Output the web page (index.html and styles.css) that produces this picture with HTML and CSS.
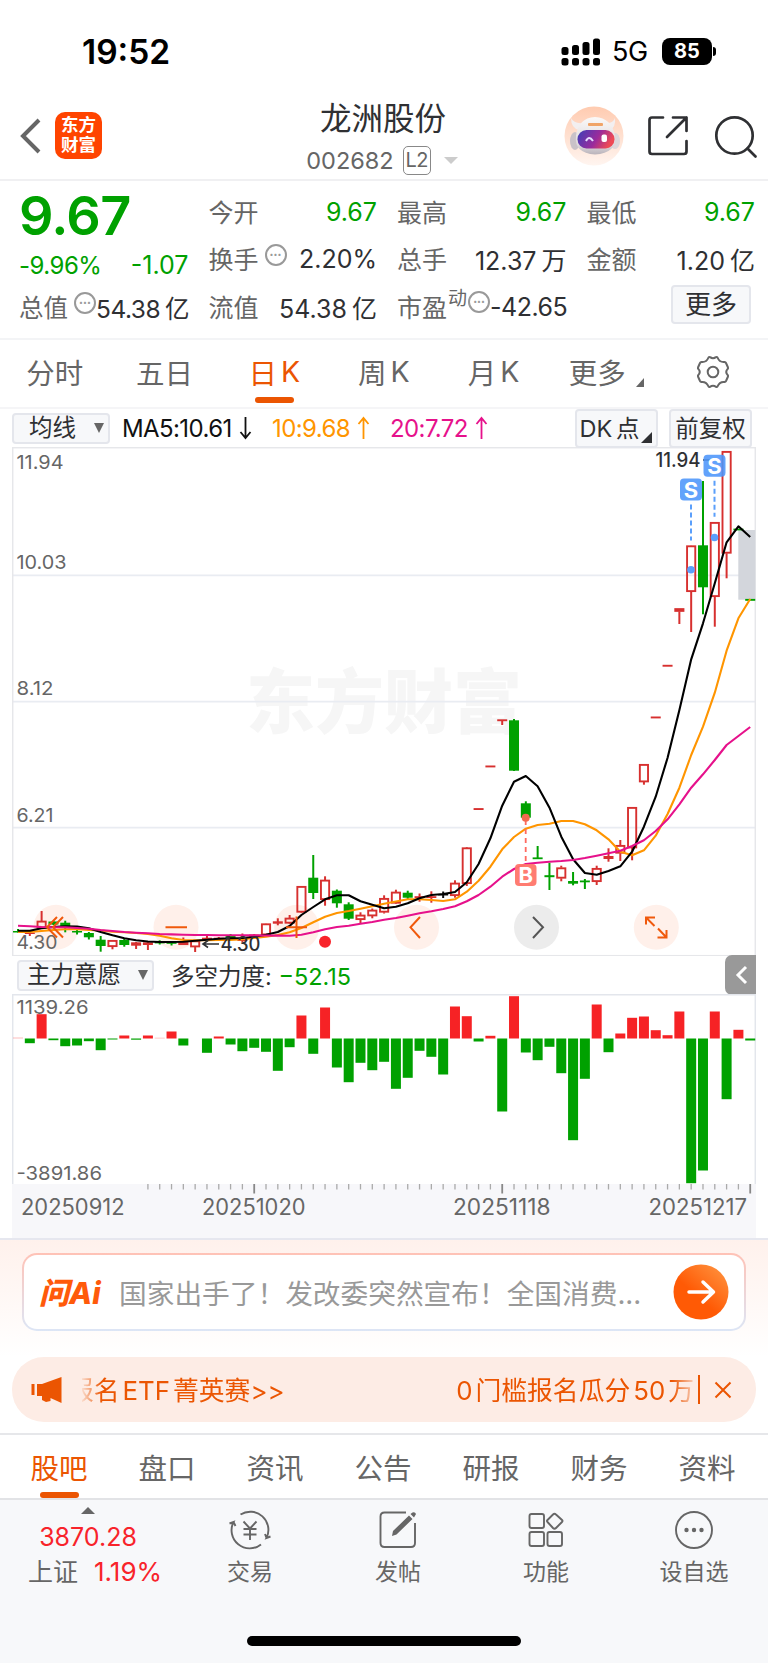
FILE: index.html
```html
<!DOCTYPE html>
<html lang="zh-CN">
<head>
	<meta charset="utf-8">
	<title>龙洲股份 002682</title>
	<link rel="stylesheet" href="styles.css">
</head>
<body>
	<div class="status">
		<span class="clock">19:52</span>
		<svg class="signal" width="40" height="28" viewBox="0 0 40 28">
			<rect x="0.5" y="9" width="7" height="8" rx="2.5"/><rect x="11" y="7" width="7" height="10" rx="2.5"/>
			<rect x="21.5" y="4" width="7" height="13" rx="2.5"/><rect x="32" y="0.5" width="7" height="16.5" rx="2.5"/>
			<rect x="0.5" y="20" width="7" height="7.5" rx="2.5"/><rect x="11" y="20" width="7" height="7.5" rx="2.5"/>
			<rect x="21.5" y="20" width="7" height="7.5" rx="2.5"/><rect x="32" y="20" width="7" height="7.5" rx="2.5"/>
		</svg>
		<span class="net">5G</span>
		<span class="battery">85</span><i class="nub"></i>
	</div>

	<header class="nav">
		<svg class="back" width="22" height="36" viewBox="0 0 22 36"><path d="M19 2L3 18L19 34" fill="none" stroke="#666" stroke-width="4"/></svg>
		<div class="logo">东方<br>财富</div>
		<div class="title">
			<h1>龙洲股份</h1>
			<div class="code">002682<span class="l2">L2</span><i class="down"></i></div>
		</div>
		<svg class="robot" width="60" height="60" viewBox="0 0 60 60">
			<defs>
				<linearGradient id="peach" x1="0" y1="0" x2="0" y2="1"><stop offset="0" stop-color="#ffcbb0"/><stop offset="1" stop-color="#fff5f0"/></linearGradient>
				<linearGradient id="face" x1="0" y1="0" x2="1" y2="0.3"><stop offset="0" stop-color="#3d3fb8"/><stop offset="0.6" stop-color="#9a2b9c"/><stop offset="1" stop-color="#ee4a55"/></linearGradient>
				<linearGradient id="shell" x1="0" y1="0" x2="0" y2="1"><stop offset="0" stop-color="#fbf9f8"/><stop offset="0.75" stop-color="#ded9dc"/><stop offset="1" stop-color="#b9b3ba"/></linearGradient>
			</defs>
			<circle cx="30" cy="30" r="29.5" fill="url(#peach)"/>
			<path d="M7 12Q7 22 15 24L19 17Q10 18 7 12ZM51 12Q52 21 46 24L41 17Q49 18 51 12Z" fill="#f3eff0"/>
			<ellipse cx="11" cy="35" rx="5" ry="9" fill="#c9c2c8"/><ellipse cx="51" cy="35" rx="5" ry="8" fill="#ddd7da"/>
			<path d="M12 30Q14 12 31 11Q48 12 51 30Q53 47 31 48.500Q10 47 12 30Z" fill="url(#shell)"/>
			<rect x="13.500" y="24" width="37" height="18.500" rx="9" fill="url(#face)"/>
			<rect x="24" y="17" width="15" height="3" rx="1" fill="#f0a468"/>
			<path d="M22 35Q25 29 29 35" fill="none" stroke="#e5dcff" stroke-width="2"/>
			<rect x="37.500" y="28.500" width="5.500" height="7.500" rx="2" fill="#fff"/>
		</svg>
		<svg class="share" width="42" height="42" viewBox="0 0 42 42" fill="none" stroke="#2f3033" stroke-width="2.700" stroke-linecap="round" stroke-linejoin="round">
			<path d="M16 2.500H5Q2.500 2.500 2.500 5V36.500Q2.500 39 5 39H37Q39.500 39 39.500 36.500V26M26 2.500H39.500V16M39.500 2.500L20 22"/>
		</svg>
		<svg class="search" width="44" height="44" viewBox="0 0 44 44" fill="none" stroke="#2f3033" stroke-width="2.700" stroke-linecap="round">
			<circle cx="20.500" cy="20.500" r="18.200"/><path d="M33.500 33.500L41.500 41.500"/>
		</svg>
	</header>

	<section class="quote">
		<div class="col first">
			<div class="price">9.67</div>
			<div class="chg"><span>-9.96%</span><span class="diff">-1.07</span></div>
			<div class="cell"><label>总值</label><i class="tip">•••</i><b>54.38<span class="sp">亿</span></b></div>
		</div>
		<div class="col">
			<div class="cell"><label>今开</label><b class="green">9.67</b></div>
			<div class="cell"><label>换手</label><i class="tip">•••</i><b>2.20%</b></div>
			<div class="cell"><label>流值</label><b>54.38<span class="sp">亿</span></b></div>
		</div>
		<div class="col">
			<div class="cell"><label>最高</label><b class="green">9.67</b></div>
			<div class="cell"><label>总手</label><b>12.37<span class="sp">万</span></b></div>
			<div class="cell"><label>市盈</label><sup>动</sup><i class="tip">•••</i><b class="pe">-42.65</b></div>
		</div>
		<div class="col">
			<div class="cell"><label>最低</label><b class="green">9.67</b></div>
			<div class="cell"><label>金额</label><b>1.20<span class="sp">亿</span></b></div>
			<div class="cell"><button class="more">更多</button></div>
		</div>
	</section>

	<nav class="periods">
		<a>分时</a><a>五日</a><a class="on">日<span class="sp">K</span></a><a>周<span class="sp">K</span></a><a>月<span class="sp">K</span></a><a class="menu">更多<i></i></a>
		<a><svg width="34" height="34" viewBox="0 0 34 34" fill="none" stroke="#666" stroke-width="2">
			<path d="M12.500 2.500Q13 1.800 14 2.200Q17 4.200 20 2.200Q21 1.800 21.500 2.500Q23.500 7.500 28.500 7Q29.600 7.200 30 8L32 12.500Q32.300 13.500 31.500 14.200Q29 17 31.500 19.800Q32.300 20.500 32 21.500L30 26Q29.600 26.800 28.500 27Q23.500 26.500 21.500 31.500Q21 32.200 20 31.800Q17 29.800 14 31.800Q13 32.200 12.500 31.500Q10.500 26.500 5.500 27Q4.400 26.800 4 26L2 21.500Q1.700 20.500 2.500 19.800Q5 17 2.500 14.200Q1.700 13.500 2 12.500L4 8Q4.400 7.200 5.500 7Q10.500 7.500 12.500 2.500Z" stroke-linejoin="round"/><circle cx="17" cy="17" r="5.300"/>
		</svg></a>
	</nav>

	<div class="ma">
		<button class="pick">均线<i class="caret"></i></button>
		<span class="m5">MA5:10.61<svg width="13" height="24" viewBox="0 0 13 24"><path d="M6.500 1V22M1.500 16L6.500 22L11.500 16"/></svg></span>
		<span class="m10">10:9.68<svg width="13" height="24" viewBox="0 0 13 24"><path d="M6.500 23V2M1.500 8L6.500 2L11.500 8"/></svg></span>
		<span class="m20">20:7.72<svg width="13" height="24" viewBox="0 0 13 24"><path d="M6.500 23V2M1.500 8L6.500 2L11.500 8"/></svg></span>
		<button class="dk">DK 点<i></i></button>
		<button class="fq">前复权</button>
	</div>

	<svg id="kline" width="744" height="509" viewBox="12 447 744 509"></svg>

	<div class="force">
		<button class="pick">主力意愿<i class="caret"></i></button>
		<div class="power">多空力度: <em>−52.15</em></div>
		<div class="fold"><svg width="14" height="22" viewBox="0 0 14 22"><path d="M12 3L4 11L12 19" fill="none" stroke="#fff" stroke-width="3"/></svg></div>
	</div>

	<svg id="bars" width="744" height="244" viewBox="12 994 744 244"></svg>

	<section class="ai">
		<div class="ask">
			<span class="mark">问Ai</span>
			<span class="hint">国家出手了！发改委突然宣布！全国消费...</span>
			<svg class="go" width="56" height="56" viewBox="0 0 56 56">
				<defs><linearGradient id="hot" x1="0.9" y1="0" x2="0.200" y2="0.8"><stop offset="0" stop-color="#ff9440"/><stop offset="0.7" stop-color="#ff5a05"/></linearGradient></defs>
				<circle cx="28" cy="28" r="27.500" fill="url(#hot)"/>
				<path d="M16 28H40M30 18L40.500 28L30 38" fill="none" stroke="#fff" stroke-width="3.500" stroke-linecap="round" stroke-linejoin="round"/>
			</svg>
		</div>
	</section>

	<div class="notice">
		<svg class="horn" width="32" height="28" viewBox="0 0 32 28" fill="#eb5502"><path d="M0.500 8H3.500V19H0.500ZM6 8H11L30.500 1V27L19.500 22V25L15 26L11 24V20H6Z"/></svg>
		<div class="roll"><span class="left">报名<span class="sp">ETF</span><span class="sp">菁英赛&gt;&gt;</span></span><span>0<span class="sp">门槛报名瓜分</span><span class="sp">50</span><span class="sp">万</span></span></div>
		<i class="bar"></i>
		<svg width="18" height="18" viewBox="0 0 18 18"><path d="M1.500 1.500L16.500 16.500M16.500 1.500L1.500 16.500" stroke="#eb5502" stroke-width="2"/></svg>
	</div>

	<nav class="topics">
		<a class="on">股吧</a><a>盘口</a><a>资讯</a><a>公告</a><a>研报</a><a>财务</a><a>资料</a>
	</nav>

	<footer class="dock">
		<div class="index">
			<i class="up"></i>
			<div class="pts">3870.28</div>
			<div class="pct">上证<span>1.19%</span></div>
		</div>
		<a><svg width="44" height="40" viewBox="0 0 44 40">
			<path d="M12.500 4.500A18.200 18.200 0 0 1 38.500 28L42.500 26.500M38.500 28L37 24M33 34.500A18.200 18.200 0 0 1 5.500 12L1.500 13.500M5.500 12L7.500 16M15.500 11.500L22 18.500L28.500 11.500M22 18.500V30M15.500 19H28.500M15.500 24.500H28.500"/></svg>交易</a>
		<a><svg width="40" height="40" viewBox="0 0 40 40">
			<path d="M28 2.500H6.500Q2.500 2.500 2.500 6.500V33Q2.500 37 6.500 37H33Q37 37 37 33V13"/>
			<path d="M15 21L31 5.500L34.500 9L18.500 24.500L14 26ZM32.500 4L34.500 2.500Q37 1.500 38 4L36 7.500Z" fill="#666" stroke="none"/></svg>发帖</a>
		<a><svg width="40" height="40" viewBox="0 0 40 40">
			<rect x="3.500" y="4" width="14.500" height="14" rx="2"/><rect x="3.500" y="22" width="14.500" height="14" rx="2"/><rect x="21.500" y="22" width="14.500" height="14" rx="2"/>
			<path d="M27 4.500Q28.500 3 30 4.500L36 10Q37 11 36 12L30 18Q28.500 19.500 27 18L21.500 12Q20.500 11 21.500 10Z"/></svg>功能</a>
		<a><svg width="40" height="40" viewBox="0 0 40 40">
			<circle cx="20" cy="20" r="18"/><g fill="#666" stroke="none"><circle cx="12.500" cy="20" r="2.200"/><circle cx="20" cy="20" r="2.200"/><circle cx="27.500" cy="20" r="2.200"/></g></svg>设自选</a>
	</footer>
	<div class="home"><i></i></div>

	<script src="chart.js"></script>
</body>
</html>
```
FILE: styles.css
```css
* {
	box-sizing: border-box;
}
body {
	margin: 0;
	width: 768px;
	height: 1663px;
	overflow: hidden;
	background: #fff;
	color: #2f3033;
	font-family: Inter, "Noto Sans CJK SC", sans-serif;
	font-size: 25px;
}
svg {
	display: block;
	flex: none;
}
i, em, b {
	font-style: normal;
	font-weight: normal;
}
button {
	font: inherit;
	color: inherit;
	padding: 0;
	background: #f7f8fa;
	border: 2px solid #e4e6ec;
	border-radius: 4px;
	white-space: nowrap;
}
.green {
	color: #00a100;
}
/* gap between latin and chinese characters */
.sp {
	margin-left: 4px;
}

/* status bar */
.status {
	height: 103px;
	padding: 0 52px 0 82px;
	display: flex;
	align-items: center;
	color: #000;
}
.clock {
	font-size: 33.500px;
	font-weight: 600;
	margin-right: auto;
}
.net {
	font-size: 27px;
	letter-spacing: -0.500px;
	margin: 0 13px 0 11px;
	width: 37px;
}
.battery {
	width: 50px;
	height: 27px;
	line-height: 27px;
	border-radius: 8px;
	background: #000;
	color: #fff;
	font-size: 20px;
	font-weight: 700;
	text-align: center;
}
.nub {
	width: 3px;
	height: 9px;
	margin-left: 1px;
	border-radius: 0 3px 3px 0;
	background: #000;
}

/* header */
.nav {
	height: 78px;
	display: flex;
	align-items: center;
	padding: 0 10px 12px 20px;
	border-bottom: 2px solid #f0f0f2;
}
.back {
	margin-top: 2px;
}
.logo {
	width: 47px;
	height: 47px;
	margin: 1px 0 0 13px;
	padding-top: 3px;
	border-radius: 10px;
	background: #ff4400;
	color: #fff;
	font-size: 17.500px;
	font-weight: bold;
	line-height: 20px;
	text-align: center;
}
.title {
	margin-left: 162px;
	width: 238px;
	text-align: center;
	padding-top: 5px;
}
.title h1 {
	margin: 0;
	font-size: 31.500px;
	font-weight: normal;
	line-height: 38px;
}
.code {
	display: flex;
	align-items: center;
	justify-content: center;
	height: 30px;
	margin: 7px 0 0 -2px;
	color: #666;
	font-size: 23.500px;
}
.l2 {
	width: 28px;
	height: 29px;
	line-height: 26px;
	margin-left: 9px;
	border: 1.500px solid #888;
	border-radius: 5px;
	font-size: 20px;
	letter-spacing: -0.500px;
}
.down {
	margin-left: 13px;
	border: 7px solid transparent;
	border-top-color: #ccc;
	border-bottom: 0;
}
.robot {
	margin: 2px 0 0 auto;
}
.share {
	margin: 2px 0 0 23px;
}
.search {
	margin: 3px 0 0 25px;
}

/* quote */
.quote {
	display: flex;
	gap: 20px;
	height: 159px;
	padding: 7px 13px 0 19px;
	border-bottom: 2px solid #f3f4f6;
}
.col {
	width: 169.500px;
}
.price {
	height: 56px;
	line-height: 56px;
	font-size: 54px;
	font-weight: 600;
	letter-spacing: -0.700px;
	color: #00a100;
}
.chg {
	height: 42px;
	display: flex;
	justify-content: space-between;
	align-items: center;
	font-size: 24px;
	letter-spacing: -0.500px;
	color: #00a100;
}
.diff {
	font-size: 25px;
	letter-spacing: 0;
}
.cell {
	height: 47.500px;
	display: flex;
	align-items: center;
	white-space: nowrap;
}
.cell label, .cell sup {
	color: #666;
	margin-top: -2px;
}
.cell b {
	margin-left: auto;
}
.cell .pe {
	letter-spacing: -0.500px;
}
.first .cell {
	height: 42px;
	font-size: 24.500px;
}
.first .cell b {
	font-size: 24.500px;
	letter-spacing: -0.500px;
}
.first .sp {
	margin-left: 3px;
}
.cell .sp {
	margin-left: 5px;
}
.cell sup {
	font-size: 19px;
	margin: -16px 0 0 1px;
	line-height: 20px;
}
.tip {
	flex: none;
	width: 22px;
	height: 22px;
	margin: -9px 0 0 6px;
	border: 2px solid #999;
	border-radius: 50%;
	color: #999;
	font-size: 7px;
	line-height: 18px;
	text-align: center;
}
sup + .tip {
	margin-left: 1px;
}
.more {
	width: 80px;
	height: 39px;
	line-height: 34px;
	margin: -4px 4px 0 auto;
	font-size: 26px;
}

/* period tabs */
.periods {
	display: flex;
	height: 69px;
	border-bottom: 2px solid #f5f5f7;
	color: #666;
	font-size: 28.500px;
}
.periods a {
	width: 109.700px;
	height: 66px;
	padding-bottom: 3px;
	display: flex;
	align-items: center;
	justify-content: center;
	position: relative;
}
.periods .on, .topics .on {
	color: #eb5502;
}
.periods .on::after, .topics .on::after {
	content: "";
	position: absolute;
	left: 50%;
	bottom: 3px;
	width: 39px;
	height: 6px;
	margin-left: -19.500px;
	border-radius: 3px;
	background: #eb5502;
}
.periods .menu {
	padding-left: 6px;
}
.menu i {
	margin: 21px 0 0 10px;
	border-left: 8px solid transparent;
	border-bottom: 9px solid #666;
}

/* moving averages */
.ma {
	display: flex;
	align-items: center;
	height: 38px;
	padding: 0 16px 0 12px;
	font-size: 24px;
}
.pick {
	height: 31px;
	line-height: 26px;
	display: flex;
	align-items: center;
	justify-content: space-between;
	font-size: 23.500px;
}
.ma .pick {
	width: 98px;
	padding: 0 4px 0 15px;
}
.caret {
	border: 5px solid transparent;
	border-top: 10px solid #666;
	border-bottom: 0;
}
.ma span {
	display: flex;
	align-items: center;
	letter-spacing: -0.600px;
}
.ma span svg {
	margin-left: 7px;
	fill: none;
	stroke: currentColor;
	stroke-width: 1.800;
}
.m5 {
	color: #111;
	width: 150px;
	margin-left: 12px;
}
.m10 {
	color: #ff9500;
	width: 118px;
}
.m20 {
	color: #e6118b;
}
.dk, .fq {
	width: 83px;
	height: 39px;
	line-height: 35px;
	position: relative;
}
.dk {
	margin-left: auto;
	padding-right: 14px;
	font-size: 23.500px;
	word-spacing: -3px;
}
.dk i {
	position: absolute;
	right: 4px;
	bottom: 3px;
	border-left: 11px solid transparent;
	border-bottom: 11px solid #2f3033;
}
.fq {
	margin-left: 11px;
	font-size: 23.500px;
}

#kline, #bars {
	margin-left: 12px;
}

/* force index row */
.force {
	display: flex;
	align-items: center;
	height: 38px;
	margin: 0 12px 0 17px;
	font-size: 23.500px;
}
.force .pick {
	width: 137px;
	padding: 0 4px 0 8px;
}
.power {
	margin-left: 17px;
}
.power em {
	color: #00a100;
}
.fold {
	width: 31px;
	height: 40px;
	margin-left: auto;
	display: flex;
	align-items: center;
	justify-content: center;
	border-radius: 7px 0 0 7px;
	background: #999;
}

/* ai search */
.ai {
	height: 119px;
	padding: 13px 22px 0;
	border-top: 2px solid #e6e7ef;
	background: linear-gradient(#fff1ec, #fff);
}
.ask {
	height: 78px;
	display: flex;
	align-items: center;
	padding: 0 15px;
	border: 2px solid transparent;
	border-radius: 15px;
	background: linear-gradient(#fff, #fff) padding-box, linear-gradient(#ffc2b6, #dce6f6) border-box;
}
.mark {
	width: 80px;
	margin-top: -2px;
	font-size: 30px;
	font-weight: 800;
	font-style: italic;
	color: #ff5a0a;
}
.hint {
	color: #999;
	font-size: 27.700px;
	margin-top: -1px;
	white-space: nowrap;
}
.go {
	margin-left: auto;
}

/* notice */
.notice {
	height: 65px;
	margin: 0 12px;
	padding: 0 24px 0 19px;
	display: flex;
	align-items: center;
	border-radius: 32px;
	background: #fdece5;
	color: #eb5502;
	font-size: 25.800px;
}
.roll {
	display: flex;
	justify-content: space-between;
	width: 616px;
	margin: -2px 0 0 19px;
	overflow: hidden;
	white-space: nowrap;
	-webkit-mask-image: linear-gradient(90deg, rgba(0,0,0,0.1), #000 20px, #000 590px, rgba(0,0,0,0.2));
}
.left {
	margin-left: -14px;
}
.roll .sp {
	margin-left: 3px;
}
.bar {
	width: 2px;
	height: 29px;
	margin: 0 14px 0 4px;
	background: #eb5502;
}

/* topic tabs */
.topics {
	display: flex;
	height: 65px;
	margin-top: 11px;
	padding: 0 5px;
	border-top: 2px solid #e6e7ea;
	color: #666;
	font-size: 28.500px;
}
.topics a {
	width: 108px;
	display: flex;
	align-items: center;
	justify-content: center;
	position: relative;
}
.topics .on::after {
	bottom: 0;
}

/* bottom bar */
.dock {
	display: flex;
	height: 132px;
	border-top: 2px solid #e2e3e6;
	background: #f7f8fa;
	color: #666;
	font-size: 23px;
}
.dock a {
	width: 148px;
	display: flex;
	flex-direction: column;
	align-items: center;
	padding-top: 10px;
	line-height: 44px;
}
.dock svg {
	fill: none;
	stroke: #666;
	stroke-width: 1.900;
}
.index {
	width: 176px;
	display: flex;
	flex-direction: column;
	align-items: center;
	font-size: 25px;
}
.up {
	margin-top: 7px;
	border: 7px solid transparent;
	border-bottom-color: #666;
	border-top: 0;
}
.pts {
	line-height: 36px;
	margin-top: 5px;
	color: #f8232a;
}
.pct {
	line-height: 34px;
	margin-left: 14px;
}
.pct span {
	color: #f8232a;
	margin-left: 16px;
	font-size: 26px;
}
.home {
	height: 34px;
	background: #f7f8fa;
	padding-top: 6px;
}
.home i {
	display: block;
	width: 274px;
	height: 10px;
	margin: 0 auto;
	border-radius: 5px;
	background: #000;
}

/* chart text */
.axis {
	fill: #666;
	font-size: 19px;
}
.date {
	fill: #666;
	font-size: 22.500px;
}
.peak {
	fill: #2f3033;
	font-size: 19.500px;
	font-weight: 500;
}
.flag {
	fill: #fff;
	font-size: 22px;
	font-weight: 700;
	text-anchor: middle;
}
.water {
	fill: #f6f6f6;
	font-size: 70px;
	font-weight: 900;
}
```
FILE: chart.js
```javascript
var NS = "http://www.w3.org/2000/svg";
var RED = "#d7302f", GREEN = "#00a100";
var STEP = 11.81, X0 = 18;

function add(parent, tag, attrs, text) {
	var el = document.createElementNS(NS, tag);
	for (var k in attrs) el.setAttribute(k, attrs[k]);
	if (text) el.textContent = text;
	parent.appendChild(el);
	return el;
}
function cx(i) { return X0 + i * STEP; }
function line(svg, x1, y1, x2, y2, color, w, dash) {
	var a = {x1: x1, y1: y1, x2: x2, y2: y2, stroke: color, "stroke-width": w};
	if (dash) a["stroke-dasharray"] = dash;
	add(svg, "line", a);
}
function label(svg, cls, x, y, w, text) {
	add(svg, "text", {"class": cls, x: x, y: y, textLength: w, lengthAdjust: "spacingAndGlyphs"}, text);
}

// type, body top, body bottom, high, low   (h = hollow, r = red, g = green, k = black)
var candles = [
	["g",931,932.5,929,932.5],["r",932.5,934,932,936],["h",921,928,911,928],["g",921.5,924.5,921,925],["g",922.7,927,920.7,932.3],
	["g",931,932.5,929,934.5],["g",933,937.3,932,939.5],["g",939.7,946,936,951.7],["h",940.3,946.7,940,949.3],["g",940,945,938.7,946.7],
	["r",942.3,945.7,942,949],["r",942.3,945,942,950],["g",941.8,943.4,940.3,944.5],["g",942.3,943.8,941,945.5],["h",942,944.7,937.5,945],
	["h",940.7,947,940,952],["r",937.7,940,936,940],["r",937.7,939.5,937,940],["g",936,938.5,934,939],["r",938,941,933.5,942],
	["r",934.5,938,934,938.5],["h",923.7,935,923.5,935],["r",921.3,923.7,918.3,925.3],["h",918,923.3,915,924],["h",886.3,912.3,886,913],
	["g",877.7,893,855,899],["h",880,899.7,876.3,905.7],["g",890.7,903.3,889.5,907.7],["g",904.3,918.7,902.3,920],["h",915,919.7,912.3,923.3],
	["h",910,916,908.5,918.3],["h",898.3,912.3,895.3,913.5],["h",892,903.3,889.7,904],["g",892.7,897.7,890.7,900],["r",896.2,898,893.5,901.7],
	["r",896.2,898,891.3,902.7],["k",894,895.5,891.5,898],["h",883,895.7,880.3,897.7],["h",847.7,883.7,847,886],["r",808.1,810,809,809],
	["r",765.5,767.4,766,766],["r",719.3,721.2,720,725],["g",720.3,770.7,719,771],["g",803.3,817.7,801.3,818],["g",857.4,859.2,846,858],
	["g",875.2,877.2,862.7,890],["h",867.7,878.3,865.7,881.3],["g",881,883.7,872,885.3],["g",880.5,882.3,879,889],["h",868.3,881.7,865.7,885],
	["r",856,859,848.3,861.7],["h",845.3,853.3,840,861],["h",807.3,848,807,860.3],["h",764.3,782,764,784.7],["r",716.5,718.4,717,717],
	["r",664.8,666.7,665,665],["h",608.5,611.5,608.5,624],["h",545.7,591.7,545.5,632],["g",545.3,587.3,481,614.3],["h",522.3,596.7,522,626.7],
	["h",451.3,553.3,451,578.3],["g",528.6,530.4,529,529],["g",598.9,600.8,600,600]
];
var ma5 = [930.7,930.7,928.3,927,926.3,926.6,928.3,932,935.3,938.3,940.3,941.5,942,942,941.7,940.7,939.7,938.7,938.3,938,936.7,934.7,932,926,915,907,899.3,895.3,895.3,901.3,904.7,908.3,906.7,903.3,898.3,895,894,892,882.3,864,838.3,805.7,781.7,776,786.3,807.7,836.7,859.3,873,874.7,871,866.3,851.7,826.7,796.7,757.7,710,659.3,623.3,583.3,542.3,526.3,537];
var ma10 = [932,932,931,930,929.3,929.3,930,930.5,931.7,932.3,933,934,935.7,938.3,940,940.3,940.3,940,940,939.3,938,936.7,935,932.3,928,922.3,916.7,913,911,908.7,906.3,903.7,901.5,899.3,899.3,900,901,899.3,891.7,880.7,866.7,849.3,837,828.7,825,823.7,821,821,824.3,830.3,839.3,851.7,855.3,850.3,835.7,814,787.7,755,726.7,692.7,650.7,618.3,599];
var ma20 = [925.7,926.3,927,927.3,927.3,928,928.7,930,931,932,932.7,933.3,934,934.4,934.7,935,935,935.2,935.3,935.3,935.4,935.5,935.6,935.7,934.7,932.3,929.3,927,925.7,923.7,922,919.8,918,915.7,913.3,911.3,909,906.3,901.3,895,886.7,876.7,869,864,862.7,861.7,861,860,858,855.7,853.3,850.7,846,840.3,831,819.3,804.3,787.7,774.3,760,745,736,727];
// positive = above the zero line
var force = [1,-4.7,24.3,-1.7,-7.7,-7,-2.7,-11.7,-1,3,-1.2,3,0.8,7,-7,0,-14.3,2,-6,-12.7,-9.3,-13.3,-32.3,-8.7,23,-15.3,31,-29,-43.7,-24.3,-31.7,-23.3,-50.3,-39.3,-12.3,-18.3,-36,32,22.3,-3,2.7,-73,42.3,-14,-21.7,-8.3,-34.7,-101.7,-40.3,34,-13.7,5,20.7,22,8.3,3.3,27,-144.7,-132,27,-60.7,8.7,-2];

function drawKline() {
	var svg = document.getElementById("kline");
	label(svg, "water", 246, 728, 276, "东方财富");
	[575.3, 701.7, 827.7].forEach(function (y) { line(svg, 12, y, 756, y, "#e9ecf2", 1.8); });
	add(svg, "rect", {x: 12.7, y: 447.7, width: 742.6, height: 508, fill: "none", stroke: "#e6e7ea", "stroke-width": 1.5});

	[56, 176, 296.7, 416.5, 536.5, 656.3].forEach(function (x, i) {
		add(svg, "circle", {cx: x, cy: 927.3, r: 22.5, fill: i == 4 ? "#ececec" : "#fff0ea"});
	});
	label(svg, "axis", 16.5, 469, 47, "11.94");
	label(svg, "axis", 16.5, 568.5, 50, "10.03");
	label(svg, "axis", 16.5, 695.3, 37, "8.12");
	label(svg, "axis", 16.5, 822.3, 37, "6.21");
	label(svg, "axis", 16.5, 949, 41, "4.30");

	add(svg, "rect", {x: 738.3, y: 530, width: 17, height: 69.7, fill: "#d3d6dc"});
	candles.forEach(function (c, i) {
		var x = cx(i), color = c[0] == "g" ? GREEN : c[0] == "k" ? "#111" : RED;
		if (c[0] == "h") {
			line(svg, x, c[3], x, c[1], color, 2);
			line(svg, x, c[2], x, c[4], color, 2);
			add(svg, "rect", {x: x - 4.1, y: c[1] + 0.6, width: 8.2, height: Math.max(c[2] - c[1] - 1.2, 1), fill: "none", stroke: color, "stroke-width": 1.9});
		} else {
			if (c[4] > c[3]) line(svg, x, c[3], x, c[4], color, 2);
			add(svg, "rect", {x: x - 5, y: c[1], width: 10, height: c[2] - c[1], fill: color});
		}
	});
	[[ma10, "#ff9500"], [ma5, "#000"], [ma20, "#e6118b"]].forEach(function (m) {
		add(svg, "polyline", {
			points: m[0].map(function (y, i) { return cx(i).toFixed(1) + "," + y; }).join(" "),
			fill: "none", stroke: m[1], "stroke-width": 2.1, "stroke-linejoin": "round"
		});
	});

	// low / high marks
	label(svg, "peak", 220.5, 950.7, 40, "4.30");
	add(svg, "path", {d: "M219 944H203M208 940.500L203 944L208 947.500", fill: "none", stroke: "#2f3033", "stroke-width": 1.6});
	label(svg, "peak", 655.5, 467, 45, "11.94");
	line(svg, 703, 460, 718, 460, "#2f3033", 1.5);

	// buy and sell flags
	line(svg, 525.7, 820, 525.7, 862, "#ff6a60", 1.8, "5 4");
	add(svg, "circle", {cx: 525.7, cy: 817.7, r: 4, fill: "#f26a50"});
	add(svg, "rect", {x: 515, y: 864, width: 21.5, height: 22, rx: 4, fill: "#ff7569", opacity: 0.95});
	add(svg, "text", {"class": "flag", x: 525.9, y: 883}, "B");
	[[691, 478.5, 569.7], [714.5, 454.7, 537.5]].forEach(function (s) {
		line(svg, s[0], s[1] + 26, s[0], s[1] + 62, "#5b9ffb", 2, "5 3");
		add(svg, "circle", {cx: s[0], cy: s[2], r: 3.8, fill: "#5b9ffb"});
		add(svg, "rect", {x: s[0] - 11, y: s[1], width: 22, height: 22, rx: 4, fill: "#4c95fb", opacity: 0.88});
		add(svg, "text", {"class": "flag", x: s[0], y: s[1] + 19}, "S");
	});
	add(svg, "circle", {cx: 325, cy: 941.7, r: 6, fill: "#f8232a"});

	// control icons
	add(svg, "path", {
		d: "M57 917L47 927.300L57 937.500M63 917L53 927.300L63 937.500M165.500 927.300H187M286 927.300H307M296.500 916.500V938M420 917L410.500 927.300L420 938M654.500 926L646 917.500M646 924.500V917.500H655M658 928.500L666.500 937.500M666.500 930V937.500H657.500",
		fill: "none", stroke: "#f0590c", "stroke-width": 2
	});
	add(svg, "path", {d: "M533 917L543 927.300L533 938", fill: "none", stroke: "#555", "stroke-width": 2});
}

function drawForce() {
	var svg = document.getElementById("bars"), zero = 1038.5;
	add(svg, "rect", {x: 12, y: 1184, width: 744, height: 54, fill: "#f7f7fa"});
	add(svg, "path", {d: "M12.700 1184V994.700H755.300V1184", fill: "none", stroke: "#e3e6ec", "stroke-width": 1.5});
	label(svg, "axis", 16.5, 1014, 72, "1139.26");
	label(svg, "axis", 16.5, 1179.7, 85.5, "-3891.86");
	force.forEach(function (v, i) {
		add(svg, "rect", {
			x: cx(i) - 5, y: v > 0 ? zero - v : zero, width: 10, height: Math.abs(v),
			fill: v > 0 ? "#f62225" : GREEN, opacity: v > 0 && v <= 1 ? 0.3 : 1
		});
		if (i > 10) {
			var big = i == 20 || i == 41 || i == 62;
			line(svg, cx(i), 1184, cx(i), big ? 1193.5 : 1189.5, big ? "#888" : "#aaa", big ? 1.8 : 1.3);
		}
	});
	label(svg, "date", 21, 1215.3, 103.5, "20250912");
	label(svg, "date", 202, 1215.3, 103.5, "20251020");
	label(svg, "date", 453, 1215.3, 97.5, "20251118");
	label(svg, "date", 648.5, 1215.3, 98.5, "20251217");
}

drawKline();
drawForce();
```
